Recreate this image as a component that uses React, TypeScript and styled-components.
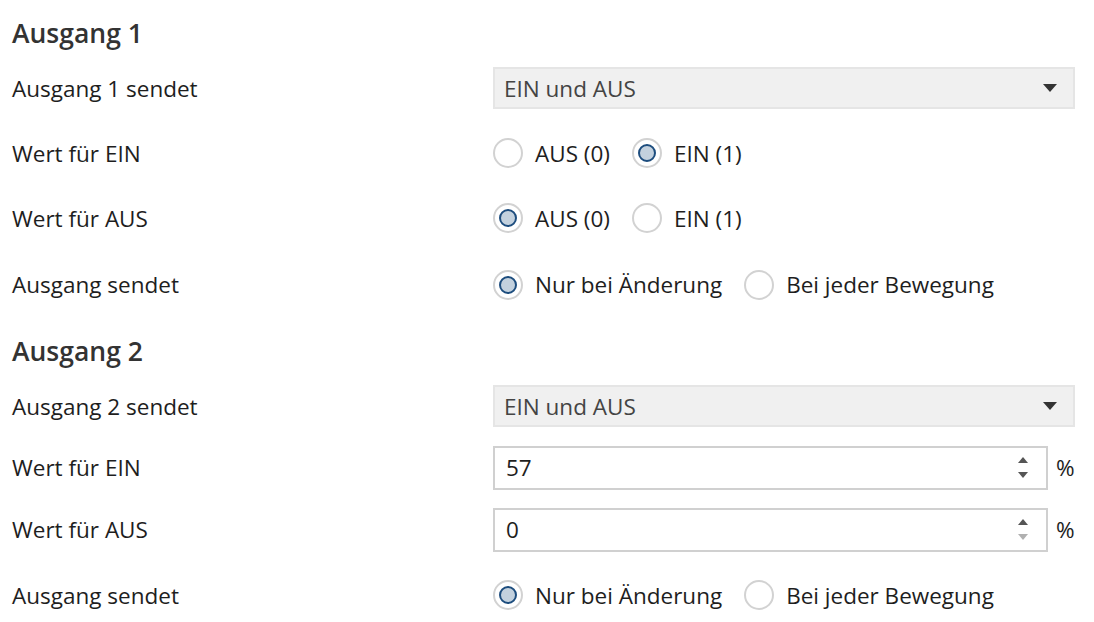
import React from "react";
import styled, { createGlobalStyle } from "styled-components";

const Global = createGlobalStyle`
  html, body { margin: 0; padding: 0; background: #ffffff; }
  body { font-family: "Open Sans", "Noto Sans", sans-serif; color: #1a1a1a; }
`;

const Page = styled.div`
  width: 1094px;
  height: 622px;
  box-sizing: border-box;
  padding: 11px 19px 0 12px;
  overflow: hidden;
`;

const Heading = styled.div<{ $h: number }>`
  height: ${(p) => p.$h}px;
  display: flex;
  align-items: center;
  font-size: 26.5px;
  font-weight: 600;
  color: #333333;
`;

const Row = styled.div<{ $h: number }>`
  height: ${(p) => p.$h}px;
  display: grid;
  grid-template-columns: 481px 1fr;
  align-items: center;
`;

const Label = styled.div`
  font-size: 22.5px;
  color: #1e1e1e;
  white-space: nowrap;
`;

const Select = styled.div`
  height: 42px;
  box-sizing: border-box;
  background: #f0f0f0;
  border: 2px solid #e5e5e5;
  display: flex;
  align-items: center;
  justify-content: space-between;
  padding: 0 16px 0 9px;
  font-size: 22.5px;
  color: #444444;
`;

const Caret = styled.span`
  width: 0;
  height: 0;
  border-left: 7px solid transparent;
  border-right: 7px solid transparent;
  border-top: 8px solid #333333;
`;

const RadioGroup = styled.div`
  display: flex;
  align-items: center;
  gap: 22px;
`;

const Option = styled.label`
  display: flex;
  align-items: center;
  gap: 12px;
  font-size: 22.5px;
  color: #1e1e1e;
  white-space: nowrap;
`;

const Circle = styled.span<{ $on: boolean }>`
  width: 30px;
  height: 30px;
  box-sizing: border-box;
  border-radius: 50%;
  border: 2px solid #d2d2d2;
  background: #ffffff;
  display: flex;
  align-items: center;
  justify-content: center;
  &::after {
    content: "";
    display: ${(p) => (p.$on ? "block" : "none")};
    width: 18px;
    height: 18px;
    box-sizing: border-box;
    border-radius: 50%;
    border: 2px solid #1d4d7e;
    background: #c3d1de;
  }
`;

const NumberLine = styled.div`
  display: flex;
  align-items: center;
  gap: 8px;
`;

const NumberBox = styled.div`
  flex: 1;
  height: 44px;
  box-sizing: border-box;
  border: 2px solid #d0d0d0;
  background: #ffffff;
  display: flex;
  align-items: center;
  justify-content: space-between;
  padding: 0 18px 0 11px;
  font-size: 22.5px;
  color: #1e1e1e;
`;

const Spinner = styled.div`
  display: flex;
  flex-direction: column;
  align-items: center;
  gap: 9px;
`;

const Up = styled.span<{ $c: string }>`
  width: 0;
  height: 0;
  border-left: 5px solid transparent;
  border-right: 5px solid transparent;
  border-bottom: 6px solid ${(p) => p.$c};
`;

const Down = styled.span<{ $c: string }>`
  width: 0;
  height: 0;
  border-left: 5px solid transparent;
  border-right: 5px solid transparent;
  border-top: 6px solid ${(p) => p.$c};
`;

const Unit = styled.span`
  font-size: 22.5px;
  color: #1e1e1e;
  width: 19px;
`;

function Radios({ options, value }: { options: string[]; value: number }) {
  return (
    <RadioGroup>
      {options.map((o, i) => (
        <Option key={o}>
          <Circle $on={i === value} />
          {o}
        </Option>
      ))}
    </RadioGroup>
  );
}

function NumberField({ value, downDisabled }: { value: string; downDisabled?: boolean }) {
  return (
    <NumberLine>
      <NumberBox>
        <span>{value}</span>
        <Spinner>
          <Up $c="#555555" />
          <Down $c={downDisabled ? "#b0b0b0" : "#555555"} />
        </Spinner>
      </NumberBox>
      <Unit>%</Unit>
    </NumberLine>
  );
}

export default function App() {
  return (
    <>
      <Global />
      <Page>
        <Heading $h={44}>Ausgang 1</Heading>
        <Row $h={66}>
          <Label>Ausgang 1 sendet</Label>
          <Select>
            EIN und AUS
            <Caret />
          </Select>
        </Row>
        <Row $h={64}>
          <Label>Wert für EIN</Label>
          <Radios options={["AUS (0)", "EIN (1)"]} value={1} />
        </Row>
        <Row $h={66}>
          <Label>Wert für AUS</Label>
          <Radios options={["AUS (0)", "EIN (1)"]} value={0} />
        </Row>
        <Row $h={67}>
          <Label>Ausgang sendet</Label>
          <Radios options={["Nur bei Änderung", "Bei jeder Bewegung"]} value={0} />
        </Row>
        <Heading $h={66}>Ausgang 2</Heading>
        <Row $h={44}>
          <Label>Ausgang 2 sendet</Label>
          <Select>
            EIN und AUS
            <Caret />
          </Select>
        </Row>
        <Row $h={79}>
          <Label>Wert für EIN</Label>
          <NumberField value="57" />
        </Row>
        <Row $h={45}>
          <Label>Wert für AUS</Label>
          <NumberField value="0" downDisabled />
        </Row>
        <Row $h={86}>
          <Label>Ausgang sendet</Label>
          <Radios options={["Nur bei Änderung", "Bei jeder Bewegung"]} value={0} />
        </Row>
      </Page>
    </>
  );
}
